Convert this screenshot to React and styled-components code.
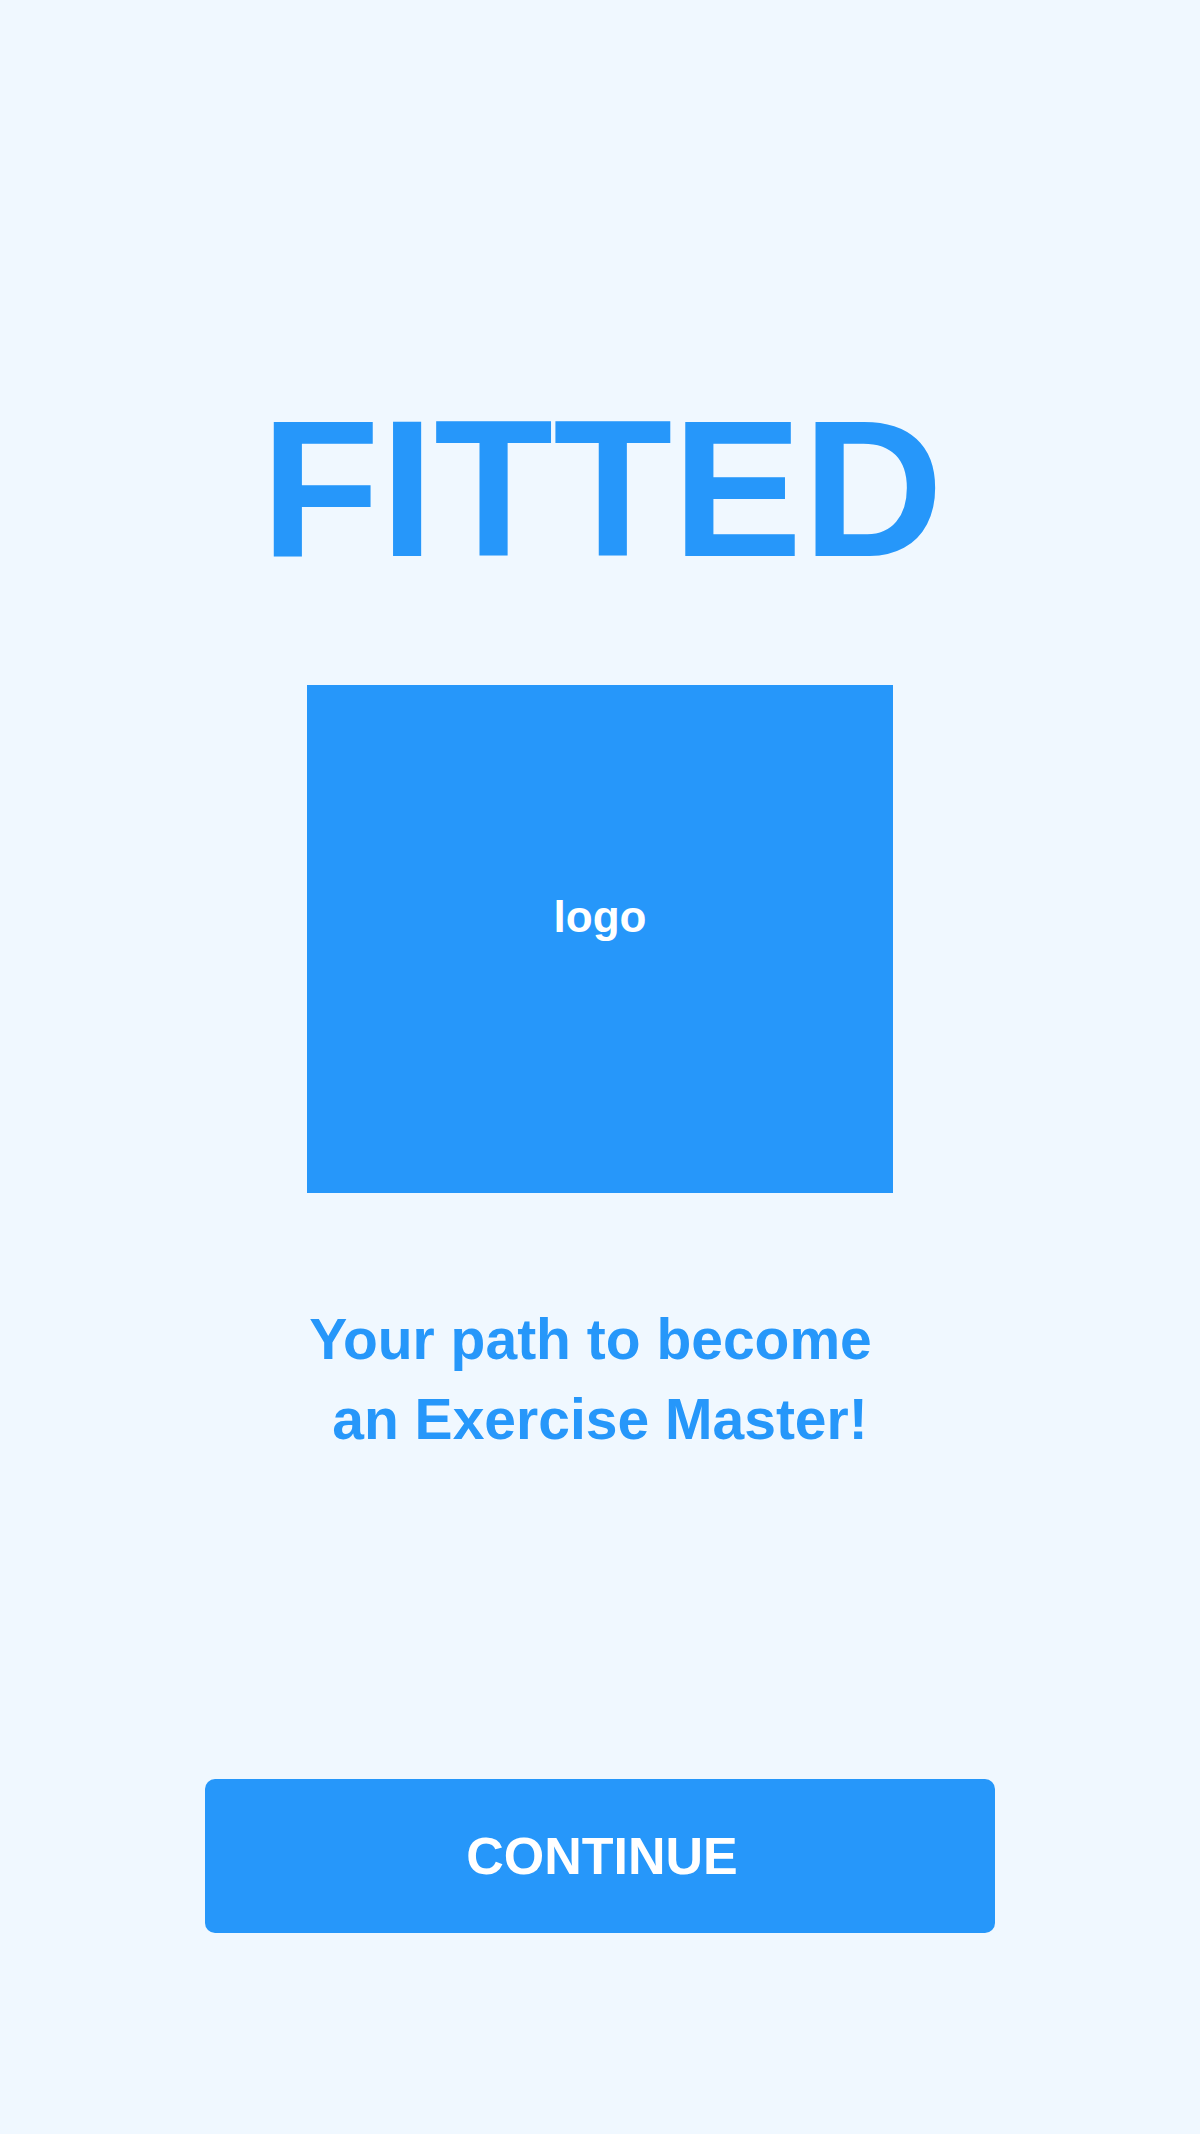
import React from 'react';
import styled, { createGlobalStyle } from 'styled-components';

const GlobalStyle = createGlobalStyle`
  html, body {
    margin: 0;
    padding: 0;
    background: #f0f8ff;
  }
  body {
    font-family: "Liberation Sans", Arial, sans-serif;
  }
`;

const Screen = styled.div`
  min-height: 2134px;
  display: flex;
  flex-direction: column;
  align-items: center;
  padding-top: 391px;
  box-sizing: border-box;
`;

const Title = styled.h1`
  margin: 0;
  padding-left: 4px;
  font-size: 195px;
  line-height: 1;
  font-weight: 700;
  color: #2697fa;
`;

const LogoBox = styled.div`
  margin-top: 99px;
  width: 586px;
  height: 508px;
  background: #2697fa;
  display: flex;
  align-items: center;
  justify-content: center;
  padding-bottom: 44px;
  box-sizing: border-box;
`;

const LogoText = styled.span`
  font-size: 44px;
  line-height: 1;
  font-weight: 700;
  color: #ffffff;
`;

const Tagline = styled.p`
  margin: 106px 0 0;
  display: flex;
  flex-direction: column;
  align-items: center;
  font-size: 57px;
  line-height: 80px;
  font-weight: 700;
  color: #2697fa;
`;

const Line = styled.span`
  padding-right: ${(p) => p.$shift || 0}px;
`;

const ContinueButton = styled.button`
  margin-top: 320px;
  width: 790px;
  height: 154px;
  border: none;
  border-radius: 10px;
  background: #2697fa;
  color: #ffffff;
  font-family: "Liberation Sans", Arial, sans-serif;
  font-size: 52px;
  font-weight: 700;
  line-height: 1;
  padding: 0 0 0 4px;
  cursor: pointer;
`;

export default function App() {
  return (
    <>
      <GlobalStyle />
      <Screen>
        <Title>FITTED</Title>
        <LogoBox>
          <LogoText>logo</LogoText>
        </LogoBox>
        <Tagline>
          <Line $shift={19}>Your path to become</Line>
          <Line>an Exercise Master!</Line>
        </Tagline>
        <ContinueButton>CONTINUE</ContinueButton>
      </Screen>
    </>
  );
}
